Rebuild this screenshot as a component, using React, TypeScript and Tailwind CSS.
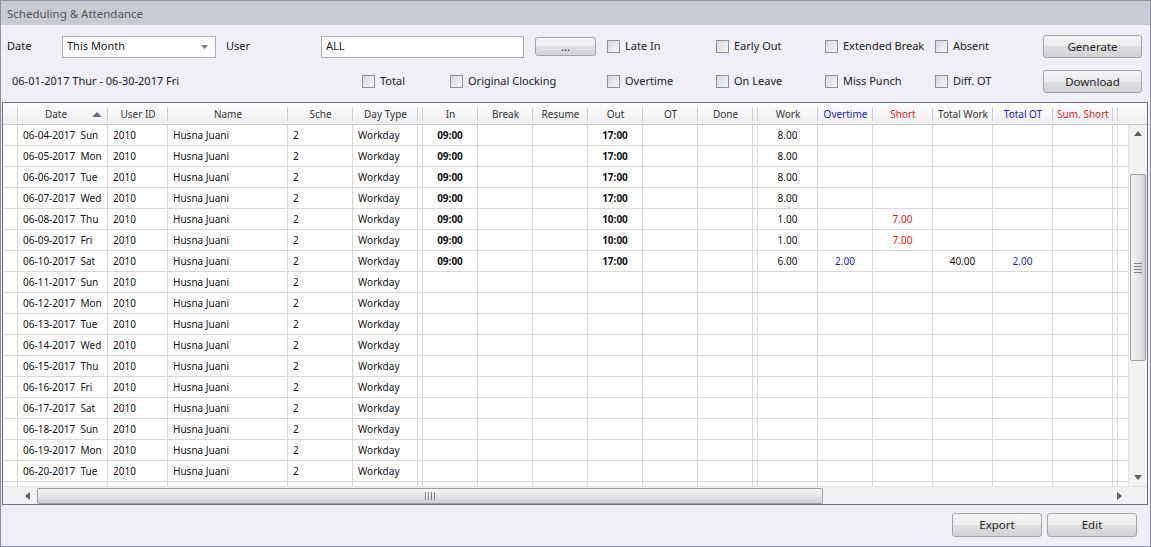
import React from 'react'

type Col = { key: string; label?: string; w: string; align?: 'left' | 'center'; color?: string; sep?: boolean }

const cols: Col[] = [
  { key: 'rh', w: 'w-[15px]', sep: true },
  { key: 'date', label: 'Date', w: 'w-[90px]', align: 'left' },
  { key: 'uid', label: 'User ID', w: 'w-[60px]', align: 'left' },
  { key: 'name', label: 'Name', w: 'w-[120px]', align: 'left' },
  { key: 'sche', label: 'Sche', w: 'w-[65px]', align: 'left' },
  { key: 'type', label: 'Day Type', w: 'w-[65px]', align: 'left' },
  { key: 's1', w: 'w-[5px]', sep: true },
  { key: 'in', label: 'In', w: 'w-[55px]', align: 'center' },
  { key: 'brk', label: 'Break', w: 'w-[55px]', align: 'center' },
  { key: 'res', label: 'Resume', w: 'w-[55px]', align: 'center' },
  { key: 'out', label: 'Out', w: 'w-[55px]', align: 'center' },
  { key: 'ot', label: 'OT', w: 'w-[55px]', align: 'center' },
  { key: 'done', label: 'Done', w: 'w-[55px]', align: 'center' },
  { key: 's2', w: 'w-[5px]', sep: true },
  { key: 'work', label: 'Work', w: 'w-[60px]', align: 'center' },
  { key: 'ovt', label: 'Overtime', w: 'w-[55px]', align: 'center', color: 'text-[#1c1cc8]' },
  { key: 'short', label: 'Short', w: 'w-[60px]', align: 'center', color: 'text-[#d81c1c]' },
  { key: 'tw', label: 'Total Work', w: 'w-[60px]', align: 'center' },
  { key: 'tot', label: 'Total OT', w: 'w-[60px]', align: 'center', color: 'text-[#1c1cc8]' },
  { key: 'ss', label: 'Sum. Short', w: 'w-[60px]', align: 'center', color: 'text-[#d81c1c]' },
  { key: 's3', w: 'w-[5px]', sep: true },
]

type Row = Record<string, string>

const days = ['Sun', 'Mon', 'Tue', 'Wed', 'Thu', 'Fri', 'Sat']
const rows: Row[] = Array.from({ length: 17 }, (_, i) => {
  const d = 4 + i
  return {
    date: `06-${String(d).padStart(2, '0')}-2017  ${days[i % 7]}`,
    uid: '2010',
    name: 'Husna Juani',
    sche: '2',
    type: 'Workday',
  }
})
Object.assign(rows[0], { in: '09:00', out: '17:00', work: '8.00' })
Object.assign(rows[1], { in: '09:00', out: '17:00', work: '8.00' })
Object.assign(rows[2], { in: '09:00', out: '17:00', work: '8.00' })
Object.assign(rows[3], { in: '09:00', out: '17:00', work: '8.00' })
Object.assign(rows[4], { in: '09:00', out: '10:00', work: '1.00', short: '7.00' })
Object.assign(rows[5], { in: '09:00', out: '10:00', work: '1.00', short: '7.00' })
Object.assign(rows[6], { in: '09:00', out: '17:00', work: '6.00', ovt: '2.00', tw: '40.00', tot: '2.00' })
// partly hidden row under the scrollbar, only its grid lines show
rows.push({})

function Check({ label, w }: { label: string; w: string }) {
  return (
    <div className={`flex items-center gap-[5px] shrink-0 ${w}`}>
      <span className="w-[13px] h-[13px] border border-[#8e8f8f] bg-linear-to-br from-[#d8d8d8] to-[#f7f7f7] shrink-0" />
      <span>{label}</span>
    </div>
  )
}

const btn =
  'border border-[#a3a3a3] rounded-[3px] bg-[linear-gradient(#f4f4f4,#ececec_48%,#dedede_52%,#d3d3d3)] text-[11.5px] text-[#1e1e1e] flex items-center justify-center shrink-0'

function Tri({ dir }: { dir: 'up' | 'down' | 'left' | 'right' }) {
  const pts = {
    up: '0,5 4,0 8,5',
    down: '0,0 8,0 4,5',
    left: '5,0 5,8 0,4',
    right: '0,0 5,4 0,8',
  }[dir]
  const vert = dir === 'up' || dir === 'down'
  return (
    <svg viewBox={vert ? '0 0 8 5' : '0 0 5 8'} className={vert ? 'w-[8px] h-[5px]' : 'w-[5px] h-[8px]'}>
      <polygon points={pts} fill="#606060" />
    </svg>
  )
}

export default function App() {
  return (
    <div className="w-[1151px] h-[547px] bg-[#efeff5] border border-[#8d8da3] flex flex-col font-['Noto_Sans',sans-serif] text-[11px] text-[#1a1a1a] overflow-hidden">
      {/* title */}
      <div className="h-[24px] shrink-0 bg-[#c9cbd3] px-[6px] pt-[1px] flex items-center text-[11.5px] text-[#555]">Scheduling &amp; Attendance</div>

      {/* filters row 1 */}
      <div className="flex items-center h-[23px] mt-[10px] pl-[6px] shrink-0">
        <span className="w-[55px] shrink-0">Date</span>
        <div className="w-[154px] h-[22px] bg-white border border-[#abadb3] flex items-center justify-between pl-[4px] pr-[7px] shrink-0">
          <span>This Month</span>
          <svg viewBox="0 0 7 4" className="w-[7px] h-[4px]">
            <polygon points="0,0 7,0 3.5,4" fill="#7a7a7a" />
          </svg>
        </div>
        <span className="w-[95px] ml-[10px] shrink-0">User</span>
        <div className="w-[203px] h-[22px] bg-white border border-[#abadb3] flex items-center pl-[4px] shrink-0">ALL</div>
        <div className={`${btn} w-[61px] h-[19px] ml-[11px] text-[10px]`}>...</div>
        <div className="ml-[11px] flex">
          <Check label="Late In" w="w-[109px]" />
          <Check label="Early Out" w="w-[109px]" />
          <Check label="Extended Break" w="w-[110px]" />
          <Check label="Absent" w="w-[108px]" />
        </div>
        <div className={`${btn} w-[99px] h-[23px]`}>Generate</div>
      </div>

      {/* filters row 2 */}
      <div className="flex items-center h-[23px] mt-[12px] pl-[11px] shrink-0">
        <span className="w-[350px] shrink-0">06-01-2017 Thur - 06-30-2017 Fri</span>
        <Check label="Total" w="w-[88px]" />
        <Check label="Original Clocking" w="w-[157px]" />
        <Check label="Overtime" w="w-[109px]" />
        <Check label="On Leave" w="w-[109px]" />
        <Check label="Miss Punch" w="w-[110px]" />
        <Check label="Diff. OT" w="w-[108px]" />
        <div className={`${btn} w-[99px] h-[23px]`}>Download</div>
      </div>

      {/* grid */}
      <div className="mt-[9px] ml-[1px] w-[1146px] h-[403px] shrink-0 border border-[#6f6f7d] bg-white flex flex-col text-[10px] overflow-hidden">
        {/* header */}
        <div className="h-[22px] shrink-0 flex border-b border-[#c9c9c9] bg-linear-to-b from-[#ffffff] to-[#eeeef0]">
          {cols.map((c) => (
            <div key={c.key} className={`${c.w} shrink-0 relative flex items-center justify-center pt-[1px] ${c.color ?? 'text-[#333]'}`}>
              {c.key === 'date' ? (
                <>
                  <span className="pr-[14px]">{c.label}</span>
                  <svg viewBox="0 0 10 5" className="absolute right-[6px] top-[9px] w-[10px] h-[5px]">
                    <polygon points="0,5 5,0 10,5" fill="#6b6b84" />
                  </svg>
                </>
              ) : (
                c.label
              )}
              <span className="absolute right-0 top-[4px] h-[14px] w-px bg-[#cfcfcf]" />
            </div>
          ))}
          <div className="flex-1" />
        </div>

        {/* body + vertical scrollbar */}
        <div className="h-[361px] shrink-0 flex">
          <div className="w-[1125px] overflow-hidden">
            {rows.map((r, i) => (
              <div key={i} className="h-[21px] flex border-b border-[#d8d8d8]">
                {cols.map((c) => (
                  <div
                    key={c.key}
                    className={`${c.w} shrink-0 border-r border-[#d8d8d8] flex items-center whitespace-pre ${
                      c.align === 'left' ? 'pl-[5px]' : 'justify-center'
                    } ${c.key === 'in' || c.key === 'out' ? 'font-bold' : ''} ${c.color ?? 'text-[#111]'}`}
                  >
                    {r[c.key] ?? ''}
                  </div>
                ))}
                <div className="flex-1" />
              </div>
            ))}
          </div>
          <div className="w-[19px] shrink-0 bg-[#f2f2f2] border-l border-[#e4e4e4] flex flex-col items-center">
            <div className="h-[17px] flex items-center justify-center">
              <Tri dir="up" />
            </div>
            <div className="mt-[32px] w-[16px] h-[187px] rounded-[2px] border border-[#9e9e9e] bg-linear-to-r from-[#f4f4f4] via-[#e6e6e6] to-[#cfcfcf] flex flex-col items-center justify-center gap-[2px]">
              <span className="w-[8px] h-px bg-[#808080]" />
              <span className="w-[8px] h-px bg-[#808080]" />
              <span className="w-[8px] h-px bg-[#808080]" />
              <span className="w-[8px] h-px bg-[#808080]" />
            </div>
            <div className="flex-1" />
            <div className="h-[17px] flex items-center justify-center">
              <Tri dir="down" />
            </div>
          </div>
        </div>

        {/* horizontal scrollbar */}
        <div className="h-[18px] shrink-0 flex bg-[#f2f2f2] border-t border-[#e4e4e4]">
          <div className="w-[15px] shrink-0" />
          <div className="w-[1110px] shrink-0 flex items-center">
            <div className="w-[19px] flex justify-center shrink-0">
              <Tri dir="left" />
            </div>
            <div className="w-[786px] h-[16px] rounded-[2px] border border-[#9e9e9e] bg-linear-to-b from-[#f4f4f4] via-[#e6e6e6] to-[#cfcfcf] flex items-center justify-center gap-[2px] shrink-0">
              <span className="h-[8px] w-px bg-[#808080]" />
              <span className="h-[8px] w-px bg-[#808080]" />
              <span className="h-[8px] w-px bg-[#808080]" />
              <span className="h-[8px] w-px bg-[#808080]" />
            </div>
            <div className="flex-1" />
            <div className="w-[18px] flex justify-center shrink-0">
              <Tri dir="right" />
            </div>
          </div>
          <div className="flex-1" />
        </div>
      </div>

      {/* footer */}
      <div className="flex justify-end gap-[5px] pr-[13px] pt-[8px]">
        <div className={`${btn} w-[90px] h-[24px]`}>Export</div>
        <div className={`${btn} w-[90px] h-[24px]`}>Edit</div>
      </div>
    </div>
  )
}
